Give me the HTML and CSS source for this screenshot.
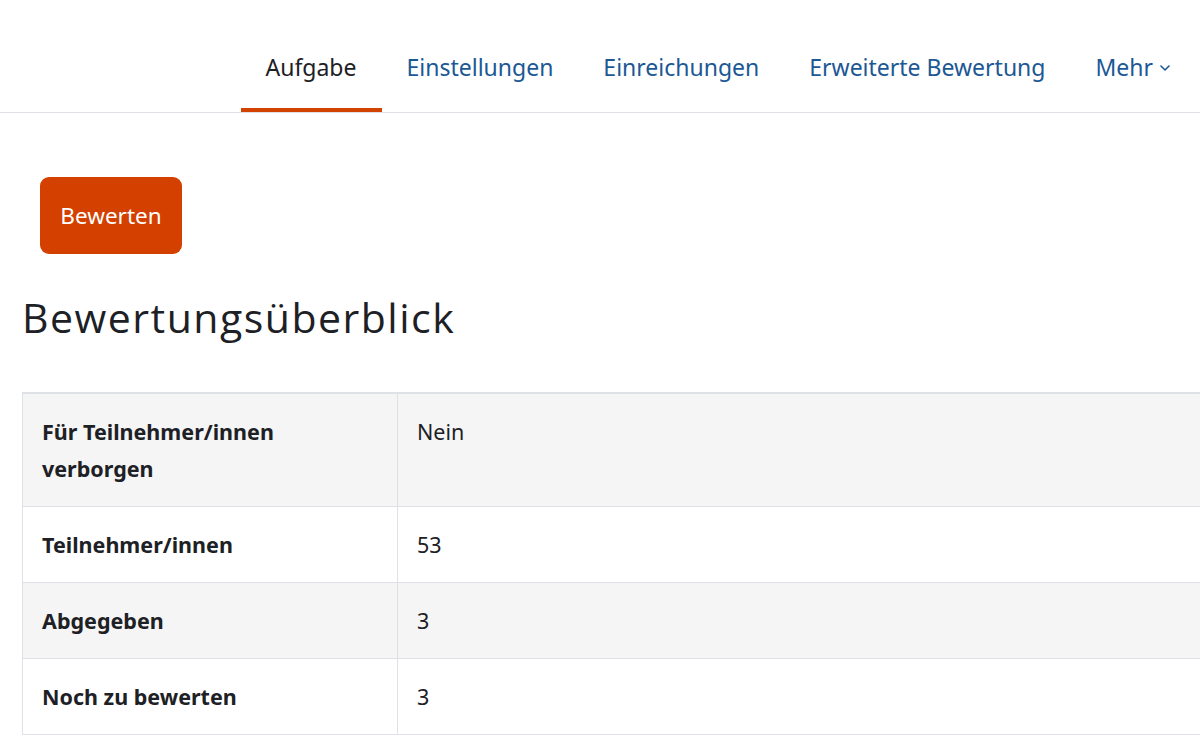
FILE: index.html
```html
<!DOCTYPE html>
<html>
    <head>
        <meta charset="utf-8" />
        <meta name="viewport" content="width=device-width" />
        <title>Aufgabe</title>
        <link rel="stylesheet" href="styles.css">
    </head>
    <body>
        <nav class="secondary-nav">
            <ul class="nav-tabs">
                <li class="nav-item active"><a href="#">Aufgabe</a></li>
                <li class="nav-item"><a href="#">Einstellungen</a></li>
                <li class="nav-item"><a href="#">Einreichungen</a></li>
                <li class="nav-item"><a href="#">Erweiterte Bewertung</a></li>
                <li class="nav-item">
                    <a href="#">Mehr
                        <svg class="caret" width="10" height="6" viewBox="0 0 10 6">
                            <path d="M1 1 L5 5 L9 1" fill="none" stroke="currentColor" stroke-width="1.6" stroke-linecap="round" stroke-linejoin="round" />
                        </svg>
                    </a>
                </li>
            </ul>
        </nav>

        <div class="page-content">
            <div class="actions">
                <button class="btn-primary">Bewerten</button>
            </div>

            <h2 class="section-title">Bewertungsüberblick</h2>

            <table class="summary-table">
                <tbody>
                    <tr>
                        <th>Für Teilnehmer/innen verborgen</th>
                        <td>Nein</td>
                    </tr>
                    <tr>
                        <th>Teilnehmer/innen</th>
                        <td>53</td>
                    </tr>
                    <tr>
                        <th>Abgegeben</th>
                        <td>3</td>
                    </tr>
                    <tr>
                        <th>Noch zu bewerten</th>
                        <td>3</td>
                    </tr>
                </tbody>
            </table>
        </div>
    </body>
</html>
```

FILE: styles.css
```css
html, body { margin: 0; padding: 0; width: 100%; height: 100%; overflow: hidden }
body {
    background: #fff;
    color: #1d2125;
    font-family: "Noto Sans", "Open Sans", sans-serif;
}

/* Tabs along the top */
.secondary-nav {
    border-bottom: 1px solid #dee2e6;
    display: flex;
    justify-content: flex-end;
}
.nav-tabs {
    list-style: none;
    margin: 0;
    padding: 0 5px 0 0;
    display: flex;
}
.nav-item a {
    display: flex;
    align-items: center;
    gap: 7px;
    height: 112px;
    padding: 25px 25px 0 25px;
    box-sizing: border-box;
    border-bottom: 4px solid transparent;
    font-size: 23px;
    color: #1c5894;
    text-decoration: none;
}
.nav-item.active a {
    color: #1d2125;
    border-bottom-color: #d24300;
}
.caret {
    margin-top: 2px;
}

.page-content {
    padding: 0 0 0 22px;
}

.actions {
    padding: 64px 0 0 18px;
}
.btn-primary {
    background: #d34000;
    color: #fff;
    border: none;
    border-radius: 9px;
    width: 142px;
    height: 77px;
    font-family: "Noto Sans", "Open Sans", sans-serif;
    font-size: 22.5px;
    cursor: pointer;
}

.section-title {
    font-family: "Open Sans", "Noto Sans", sans-serif;
    font-weight: 400;
    font-size: 41px;
    letter-spacing: 1.5px;
    margin: 36px 0 48px 0;
    line-height: 54px;
}

/* Striped summary table */
.summary-table {
    width: 100%;
    border-collapse: collapse;
    border-top: 2px solid #dee2e6;
    border-left: 1px solid #dee2e6;
    font-family: "Noto Sans", "Open Sans", sans-serif;
    font-size: 21.5px;
}
.summary-table th,
.summary-table td {
    text-align: left;
    vertical-align: top;
    padding: 19px 19px 19px 19px;
    line-height: 37px;
    border-bottom: 1px solid #dee2e6;
}
.summary-table th {
    width: 336px;
    font-weight: 700;
    border-right: 1px solid #dee2e6;
}
.summary-table td {
    font-weight: 400;
}
.summary-table tr:nth-child(odd) {
    background: #f5f5f5;
}
```
